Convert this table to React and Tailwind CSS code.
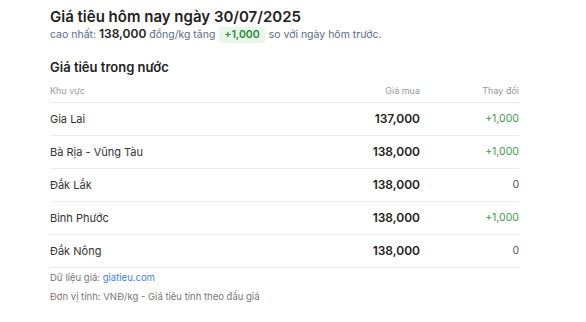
import React from "react";

const rows = [
  { name: "Gia Lai", price: "137,000", change: "+1,000", up: true },
  { name: "Bà Rịa - Vũng Tàu", price: "138,000", change: "+1,000", up: true },
  { name: "Đắk Lắk", price: "138,000", change: "0", up: false },
  { name: "Bình Phước", price: "138,000", change: "+1,000", up: true },
  { name: "Đắk Nông", price: "138,000", change: "0", up: false },
];

export default function App() {
  return (
    <div className="w-[586px] h-[322px] bg-white font-['Inter',sans-serif] overflow-hidden">
      <div className="pl-[50px] pr-[67px] pt-[8px]">
        <h1 className="text-[15px] leading-[18px] font-semibold text-[#222]">
          Giá tiêu hôm nay ngày 30/07/2025
        </h1>
        <p className="text-[10.5px] leading-[16px] text-[#5b6b86]">
          cao nhất: <span className="font-semibold text-[12px] text-[#222]">138,000</span> đồng/kg tăng{" "}
          <span className="inline-block bg-[#e9f6ea] text-[#2e8b3e] font-semibold px-[5px] mx-[1px] rounded-[2px]">+1,000</span>{" "}
          so với ngày hôm trước.
        </p>
        <h2 className="mt-[15px] text-[13px] leading-[18px] font-semibold text-[#222]">Giá tiêu trong nước</h2>
        <div className="mt-[9px]">
          <div className="flex items-center leading-[12px] pb-[5px] border-b border-[#e8e8e8] text-[9px] text-[#999]">
            <div className="flex-1">Khu vực</div>
            <div className="w-[120px] text-right">Giá mua</div>
            <div className="w-[99px] text-right">Thay đổi</div>
          </div>
          {rows.map((r) => (
            <div key={r.name} className="flex items-center h-[33px] border-b border-[#ececec]">
              <div className="flex-1 text-[11px] text-[#333]">{r.name}</div>
              <div className="w-[120px] text-right text-[12px] font-semibold text-[#222]">{r.price}</div>
              <div className={`w-[99px] text-right text-[10.5px] ${r.up ? "text-[#3e9b4f]" : "text-[#555]"}`}>{r.change}</div>
            </div>
          ))}
        </div>
        <p className="mt-[4px] text-[9.5px] leading-[12px] text-[#777]">
          Dữ liệu giá: <span className="text-[#3b82f6]">giatieu.com</span>
        </p>
        <p className="mt-[7px] text-[9.5px] leading-[12px] text-[#777]">
          Đơn vị tính: VNĐ/kg - Giá tiêu tính theo đầu giá
        </p>
      </div>
    </div>
  );
}
